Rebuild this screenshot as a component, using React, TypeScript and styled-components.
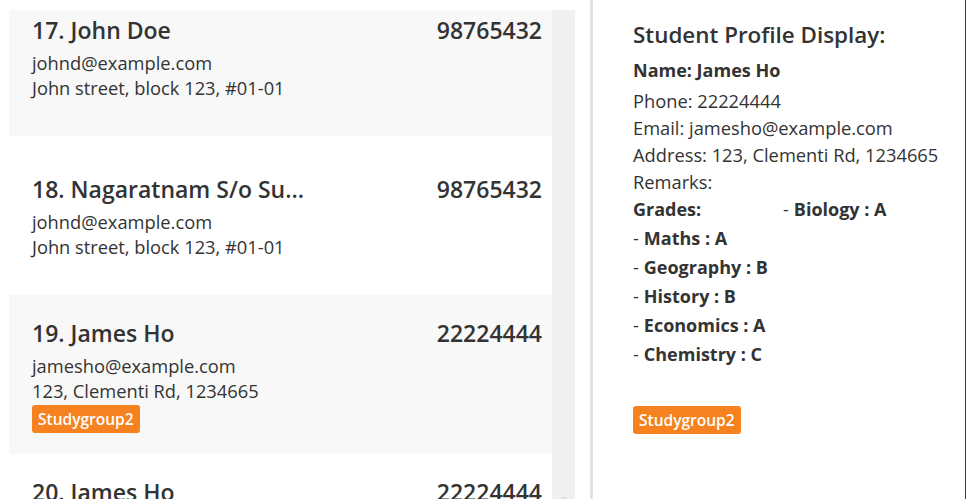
import React from "react";
import styled, { createGlobalStyle } from "styled-components";

const GlobalStyle = createGlobalStyle`
  html, body { margin: 0; padding: 0; background: #ffffff; }
  body { font-family: "Open Sans", "Noto Sans", sans-serif; color: #333333; }
  * { box-sizing: border-box; }
`;

const Window = styled.div`
  display: flex;
  width: 966px;
  height: 499px;
  overflow: hidden;
  background: #ffffff;
`;

const ListPane = styled.div`
  display: flex;
  flex: 0 0 575px;
  padding: 10px 0 0 9px;
  height: 100%;
`;

const ListViewport = styled.div`
  flex: 1;
  overflow: hidden;
`;

const ListInner = styled.div`
  margin-top: -33px;
`;

const ScrollTrack = styled.div`
  position: relative;
  flex: 0 0 23px;
  background: #f0f0f0;
`;

const ScrollThumb = styled.div`
  position: absolute;
  left: 7px;
  top: 487px;
  width: 9px;
  height: 30px;
  border-radius: 5px;
  background: #dedede;
`;

const Card = styled.div<{ $shaded: boolean }>`
  display: flex;
  flex-direction: column;
  justify-content: center;
  height: 159px;
  padding: 0 10px 0 23px;
  background: ${(p) => (p.$shaded ? "#f8f8f8" : "#ffffff")};
`;

const CardHeader = styled.div`
  display: flex;
  justify-content: space-between;
  align-items: baseline;
  margin-bottom: 4px;
`;

const BigLabel = styled.span`
  font-size: 23px;
  font-weight: 600;
  line-height: 32px;
  color: #333333;
  white-space: nowrap;
`;

const SmallLabel = styled.div`
  font-size: 18.3px;
  line-height: 25px;
  color: #333333;
  white-space: nowrap;
`;

const Tags = styled.div`
  display: flex;
  gap: 6px;
  margin-top: 2px;
`;

const Tag = styled.span`
  display: inline-flex;
  align-items: center;
  height: 28px;
  padding: 0 6px;
  border-radius: 3px;
  background: #f5821f;
  color: #ffffff;
  font-size: 15.5px;
  font-weight: 600;
`;

const Gutter = styled.div`
  flex: 0 0 15px;
`;

const Divider = styled.div`
  flex: 0 0 3px;
  background: #e3e3e3;
`;

const ProfilePanel = styled.div`
  flex: 1;
  display: flex;
  flex-direction: column;
  align-items: flex-start;
  padding: 19px 0 0 40px;
  border-right: 1px solid #3a3a3a;
`;

const Heading = styled.div`
  font-size: 22.4px;
  font-weight: 600;
  line-height: 32px;
  margin-bottom: 6px;
  white-space: nowrap;
`;

const InfoLine = styled.div<{ $bold?: boolean }>`
  font-size: ${(p) => (p.$bold ? "18px" : "18.3px")};
  font-weight: ${(p) => (p.$bold ? 700 : 400)};
  line-height: 27px;
  white-space: nowrap;
`;

const NameLine = styled(InfoLine)`
  margin-bottom: 3px;
`;

const GradeRow = styled.div`
  display: flex;
  font-size: 18px;
  font-weight: 700;
  line-height: 29px;
  white-space: nowrap;
`;

const GradeLabel = styled.span`
  width: 150px;
`;

const Dash = styled.span`
  font-weight: 400;
  margin-right: 5px;
`;

const PanelTags = styled.div`
  margin-top: 37px;
`;

type Person = {
  index: number;
  name: string;
  phone: string;
  email: string;
  address: string;
  tags: string[];
};

const people: Person[] = [
  { index: 17, name: "John Doe", phone: "98765432", email: "johnd@example.com", address: "John street, block 123, #01-01", tags: [] },
  { index: 18, name: "Nagaratnam S/o Su...", phone: "98765432", email: "johnd@example.com", address: "John street, block 123, #01-01", tags: [] },
  { index: 19, name: "James Ho", phone: "22224444", email: "jamesho@example.com", address: "123, Clementi Rd, 1234665", tags: ["Studygroup2"] },
  { index: 20, name: "James Ho", phone: "22224444", email: "jamesho@example.com", address: "123, Clementi Rd, 1234665", tags: ["Studygroup2"] },
];

const grades = ["Maths : A", "Geography : B", "History : B", "Economics : A", "Chemistry : C"];

export default function App() {
  return (
    <>
      <GlobalStyle />
      <Window>
        <ListPane>
          <ListViewport>
            <ListInner>
              {people.map((p) => (
                <Card key={p.index} $shaded={p.index % 2 === 1}>
                  <CardHeader>
                    <BigLabel>
                      {p.index}. {p.name}
                    </BigLabel>
                    <BigLabel>{p.phone}</BigLabel>
                  </CardHeader>
                  <SmallLabel>{p.email}</SmallLabel>
                  <SmallLabel>{p.address}</SmallLabel>
                  {p.tags.length > 0 && (
                    <Tags>
                      {p.tags.map((t) => (
                        <Tag key={t}>{t}</Tag>
                      ))}
                    </Tags>
                  )}
                </Card>
              ))}
            </ListInner>
          </ListViewport>
          <ScrollTrack>
            <ScrollThumb />
          </ScrollTrack>
        </ListPane>
        <Gutter />
        <Divider />
        <ProfilePanel>
          <Heading>Student Profile Display:</Heading>
          <NameLine $bold>Name: James Ho</NameLine>
          <InfoLine>Phone: 22224444</InfoLine>
          <InfoLine>Email: jamesho@example.com</InfoLine>
          <InfoLine>Address: 123, Clementi Rd, 1234665</InfoLine>
          <InfoLine>Remarks:</InfoLine>
          <GradeRow>
            <GradeLabel>Grades:</GradeLabel>
            <span>
              <Dash>-</Dash>Biology : A
            </span>
          </GradeRow>
          {grades.map((g) => (
            <GradeRow key={g}>
              <Dash>-</Dash>
              {g}
            </GradeRow>
          ))}
          <PanelTags>
            <Tag>Studygroup2</Tag>
          </PanelTags>
        </ProfilePanel>
      </Window>
    </>
  );
}
